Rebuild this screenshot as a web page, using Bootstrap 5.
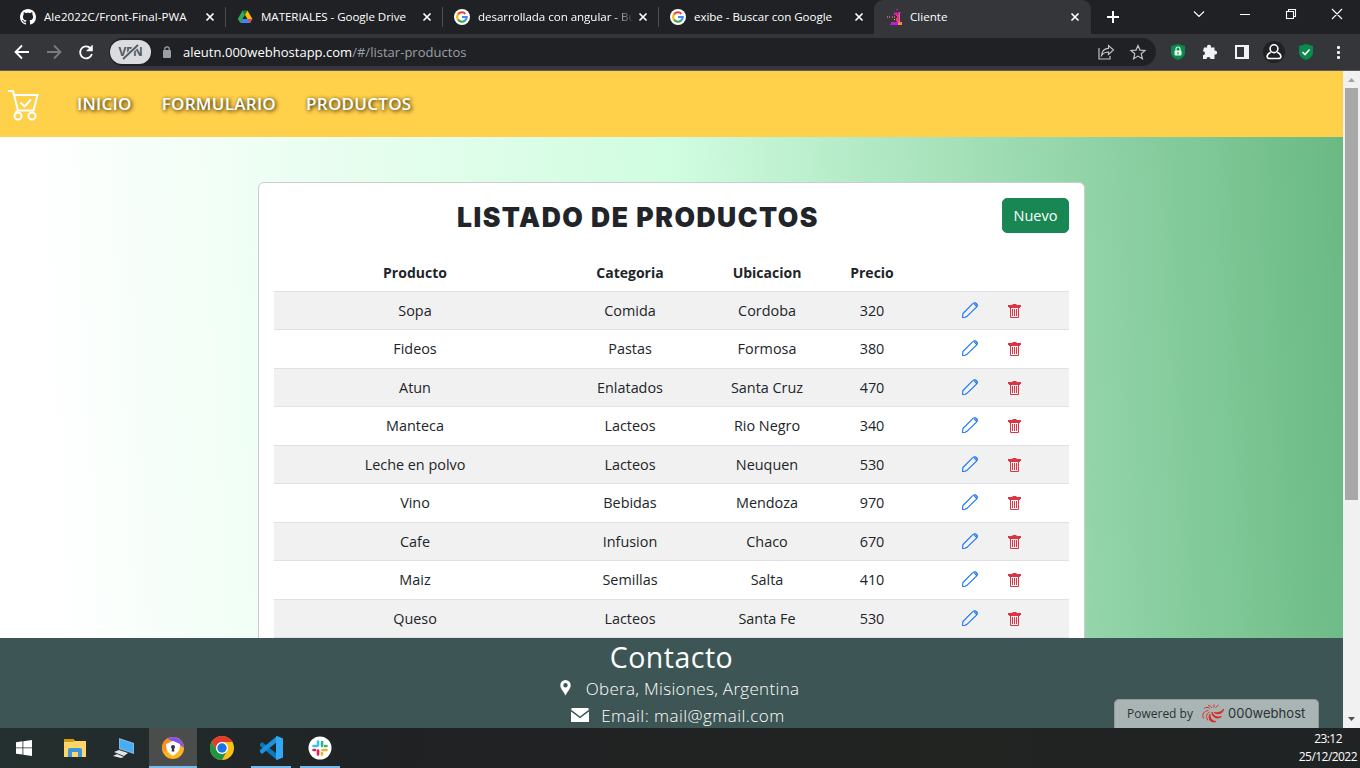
<!DOCTYPE html>
<html lang="es">
<head>
<meta charset="utf-8">
<title>Cliente</title>
<meta name="viewport" content="width=device-width, initial-scale=1">
<link rel="stylesheet" href="https://cdn.jsdelivr.net/npm/bootstrap@5.3.0/dist/css/bootstrap.min.css">
<style>
  html, body { height: 100%; overflow: hidden; }
  body { font-family: "Open Sans", "Noto Sans", sans-serif; font-size: 15px; }
  svg { display: block; flex: none; }
  .tabstrip { height: 34px; background: #202124; color: #fff; font-size: 12px; }
  .btab { height: 34px; width: 217px; padding-left: 20px; position: relative; }
  .btab .ttl { width: 160px; margin-left: 8px; white-space: nowrap; font-size: 11.6px; line-height: 18px; }
  .btab .ttl.fade-end { -webkit-mask-image: linear-gradient(90deg, #000 135px, transparent 156px); }
  .btab .closer { margin-left: auto; margin-right: 10px; }
  .btab.sep { border-right: 1px solid #4a4c50; height: 20px; }
  .btab.current { background: #35363a; border-radius: 9px 9px 0 0; padding-left: 13px; }
  .btab.current .ttl { margin-left: 7px; }
  .btab.current .closer { margin-right: 11px; }
  .toolbar { height: 37px; background: #35363a; border-bottom: 1px solid #5b5c60; }
  .omni { height: 28px; background: #202124; border-radius: 14px; width: 1047px; margin-left: 13px; font-size: 13px; color: #fff; }
  .omni .addr { padding: 1px 0 0 3px; letter-spacing: .02px; }
  .vpn { width: 41px; height: 24px; border-radius: 12px; background: #dadce0; color: #55585d; font: bold 12px/24px "Open Sans", sans-serif; letter-spacing: -.3px; position: relative; margin-left: 1px; }
  .vpn svg { position: absolute; left: 12px; top: 4px; }
  .viewport { height: 657px; }
  .site { width: 1343px; background: linear-gradient(87deg, #fff 4%, #d0fde0 51%, #69b983 100%); }
  .topnav { height: 66px; background: #ffd04a; padding: 0 0 0 8px; }
  .topnav a { color: #fff; font-size: 17px; font-weight: 600; text-decoration: none; text-shadow: 1px 1px 4px #000; line-height: 24px; white-space: nowrap; letter-spacing: .28px; }
  .content-area { height: 501px; overflow: hidden; padding-top: 45px; }
  .product-card { width: 827px; height: 600px; margin-left: 258px; border-color: #c8cfca; border-radius: 6px; padding: 15px; }
  .headline { font-family: Inter, sans-serif; font-weight: 900; font-size: 26.5px; line-height: 36px; margin: 1px 0 0; color: #212529; white-space: nowrap; letter-spacing: 1.5px; }
  .btn-new { width: 67px; height: 35px; padding: 0; font-size: 14.5px; border-radius: 5px; }
  .products { table-layout: fixed; width: 795px; margin: 18px 0 0; }
  .products > :not(caption) > * > * { height: 38.5px; padding: 1px 0 0; vertical-align: middle; line-height: 22px; border-color: #dee2e6; }
  .products > thead > tr > * { height: 38px; padding-top: 2px; }
  .products th { font-size: 14px; }
  .products td { font-size: 14.4px; font-weight: 400; }
  .products.table-striped > tbody > tr:nth-of-type(odd) > * { --bs-table-accent-bg: #f1f1f1; background: #f1f1f1; box-shadow: none; }
  .products .acts svg { display: inline-block; vertical-align: -2px; }
  .foot { height: 90px; background: #3d5655; color: #fff; position: relative; }
  .foot h2 { font-size: 28.5px; line-height: 34px; margin: 2px 0 0; font-weight: 500; letter-spacing: .5px; }
  .foot .line { font-size: 17px; line-height: 27px; height: 27px; white-space: nowrap; font-weight: 300; letter-spacing: .32px; }
  .foot .line span { padding-top: 1px; }
  .powered { position: absolute; right: 24px; bottom: 0; width: 205px; height: 29px; background: #a9b5b4; border: 1px solid #8d9a99; border-bottom: 0; border-radius: 5px 5px 0 0; color: #2b3233; font-size: 12px; }
  .sbar { width: 17px; background: #f1f1f1; }
  .sbar .thumb { width: 13px; height: 412px; background: #a8a8a8; }
  .taskbar { height: 40px; background: linear-gradient(90deg, #24302f, #1f2123 30%, #222422 70%, #202324); color: #fff; }
  .task { width: 49px; height: 40px; border-bottom: 2px solid transparent; }
  .task.live { background: #4b4d4d; width: 48px; border-color: #76b9ed; }
  .task.open { width: 40px; border-color: #76b9ed; }
  .clock { font-size: 12px; line-height: 18px; letter-spacing: -.55px; }
</style>
</head>
<body class="d-flex flex-column">
<svg width="0" height="0" class="position-absolute" aria-hidden="true">
  <symbol id="x" viewBox="0 0 10 10"><path d="M1.500 1.500l7 7M8.500 1.500l-7 7" stroke="#fff" stroke-width="1.700"/></symbol>
  <symbol id="g" viewBox="0 0 16 16"><circle cx="8" cy="8" r="8" fill="#fff"/><g fill="none" stroke-width="2.100"><path d="M4 5.400A4.600 4.600 0 0 1 11.400 4.900" stroke="#ea4335"/><path d="M4 5.400A4.700 4.700 0 0 0 4 10.600" stroke="#fbbc05"/><path d="M4 10.500A4.700 4.700 0 0 0 11 11.600" stroke="#34a853"/><path d="M11 11.600A4.600 4.600 0 0 0 12.700 8H8" stroke="#4285f4"/></g></symbol>
  <symbol id="pen" viewBox="0 0 16 16"><path d="M.6 15.400l.3-3.800L10 2.300C11.200 1 12.600.3 13.600 1L15 2.200c.7.800.3 2-.8 3.200L5 14.300l-1.800.9zM12 1.700l2.500 2.600M13 .5l2.500 2.600" fill="none" stroke="currentColor" stroke-width="1.050"/></symbol>
  <symbol id="trash" viewBox="0 0 13 14"><path d="M0 1h4.500V0h4v1H13v2h-1v1H1V3H0z" fill="currentColor"/><path d="M2.500 3.500v10h8v-10M4.500 5v7M6.500 5v7M8.500 5v7" fill="none" stroke="currentColor"/></symbol>
</svg>

<div class="tabstrip d-flex align-items-center">
  <div class="btab sep d-flex align-items-center" style="width:226px">
    <svg width="16" height="16" viewBox="0 0 16 16" fill="#fff"><path d="M8 0C3.580 0 0 3.580 0 8c0 3.540 2.290 6.530 5.470 7.590.4.070.55-.17.55-.38 0-.19-.01-.82-.01-1.490-2.010.37-2.530-.49-2.690-.94-.09-.23-.48-.94-.82-1.130-.28-.15-.68-.52-.01-.53.63-.01 1.080.58 1.230.82.72 1.210 1.870.87 2.330.66.07-.52.28-.87.51-1.070-1.780-.2-3.640-.89-3.640-3.950 0-.87.31-1.590.82-2.150-.08-.2-.36-1.020.08-2.120 0 0 .67-.21 2.200.82.64-.18 1.320-.27 2-.27s1.360.09 2 .27c1.530-1.040 2.200-.82 2.200-.82.44 1.100.16 1.920.08 2.120.51.56.82 1.270.82 2.150 0 3.070-1.870 3.750-3.650 3.950.29.25.54.73.54 1.480 0 1.070-.01 1.930-.01 2.200 0 .21.15.46.55.38A8 8 0 0 0 16 8c0-4.420-3.580-8-8-8"/></svg>
    <span class="ttl" style="letter-spacing:.04px">Ale2022C/Front-Final-PWA</span><svg class="closer" width="10" height="10"><use href="#x"/></svg>
  </div>
  <div class="btab sep d-flex align-items-center" style="width:217px;padding-left:11px">
    <svg width="16" height="16" viewBox="0 0 16 16"><path d="M5.500 1.500L8 5.800 3.300 14 .8 10z" fill="#34a853"/><path d="M5.500 1.500h5L8 5.800z" fill="#188038"/><path d="M10.500 1.500l4.900 8.500h-5L8 5.800z" fill="#fbbc04"/><path d="M5.600 10h9.800L13 14H3.300z" fill="#4285f4"/><path d="M10.500 10h4.900L13 14z" fill="#ea4335"/></svg>
    <span class="ttl" style="letter-spacing:-.06px">MATERIALES - Google Drive</span><svg class="closer" width="10" height="10"><use href="#x"/></svg>
  </div>
  <div class="btab sep d-flex align-items-center" style="width:216px;padding-left:11px">
    <svg width="16" height="16"><use href="#g"/></svg>
    <span class="ttl fade-end" style="letter-spacing:-.05px">desarrollada con angular - Bu</span><svg class="closer" width="10" height="10"><use href="#x"/></svg>
  </div>
  <div class="btab d-flex align-items-center" style="width:215px;padding-left:11px">
    <svg width="16" height="16"><use href="#g"/></svg>
    <span class="ttl" style="letter-spacing:-.06px">exibe - Buscar con Google</span><svg class="closer" width="10" height="10"><use href="#x"/></svg>
  </div>
  <div class="btab current d-flex align-items-center">
    <svg width="16" height="16" viewBox="0 0 16 16" fill="#e0388f" shape-rendering="crispEdges"><path d="M9 0h2v1H9z" fill="#c8286f"/><path d="M7 3h1v1h1V3h1v1h1V3h3v1h-1v2H7z" fill="#d41fae"/><path d="M0 7h1v2H0zM2 7h1v2H2zM5 7h1v2H5zM7 7h1v2H7z" fill="#c75a60"/><path d="M9 6h4v6H9V9h1V7H9z"/><path d="M7 10h1v1H7z" fill="#ffcf3d"/><path d="M12 4h1v9h2v3h-5v-4h2z" fill="#f0607a"/><path d="M13 13h2v3h-4v-2h2z" fill="#ff8a3d"/><path d="M4 13h7v3H3v-1h1z" fill="#c41bd0"/></svg>
    <span class="ttl">Cliente</span><svg class="closer" width="10" height="10"><use href="#x"/></svg>
  </div>
  <svg width="14" height="14" style="margin-left:15px" viewBox="0 0 14 14"><path d="M7 1v12M1 7h12" stroke="#fff" stroke-width="2"/></svg>
  <svg class="ms-auto" width="168" height="34" viewBox="1192 0 168 34" fill="none" stroke="#fff" stroke-width="1.100"><path d="M1194 11.500l5 5 5-5M1240 14.500h10M1286.500 11.500h7v7h-7zM1288.500 11.500v-2h7v7h-2M1332 9l10 10M1342 9l-10 10"/></svg>
</div>

<div class="toolbar d-flex align-items-center">
  <svg width="96" height="36" viewBox="0 0 96 36" fill="none" stroke="#fff" stroke-width="1.800"><path d="M29 18H16M22 11.500L15.500 18l6.500 6.500"/><path d="M47 18h13M54 11.500L60.500 18 54 24.500" stroke="#7b7c7f"/><path d="M90.500 14.200a6 6 0 1 0 1.400 5.800"/><path d="M92.500 11v6h-6z" fill="#fff" stroke-width=".5"/></svg>
  <div class="omni d-flex align-items-center">
    <div class="vpn text-center">VPN<svg width="18" height="16"><path d="M1 15L16 1" stroke="#dadce0" stroke-width="4"/><path d="M1 15L16 1" stroke="#55585d" stroke-width="1.800"/></svg></div>
    <svg width="10" height="12" viewBox="0 0 10 12" style="margin-left:11px"><rect x="1" y="4" width="8" height="8" rx="1" fill="#9aa0a6"/><path d="M2.800 5V3a2.200 2.200 0 0 1 4.400 0v2" stroke="#9aa0a6" stroke-width="1.300" fill="none"/></svg>
    <span class="ms-2 text-nowrap addr">aleutn.000webhostapp.com<span style="color:#9aa0a6">/#/listar-productos</span></span>
    <svg class="ms-auto me-2" width="50" height="18" viewBox="0 0 50 18" fill="none" stroke="#c2c4c7" stroke-width="1.200"><path d="M1 5v11h11v-3M3.500 12.500c.5-5 3-7 7-7.200V2.500L15.500 7l-5 4.500V9c-3 0-5 .9-7 3.500z"/><path d="M40 2.500l2 4.600 5 .4-3.800 3.300 1.200 4.900-4.400-2.600-4.400 2.600 1.200-4.900L33 7.500l5-.4z"/></svg>
  </div>
  <svg class="ms-auto" width="190" height="36" viewBox="1170 34 190 36"><g fill="#0b8a4c"><path d="M1178 44l7 2v6.500c0 4-4 6.500-7 7.500-3-1-7-3.500-7-7.500V46z"/><path d="M1306 44l7 2v6.500c0 4-4 6.500-7 7.500-3-1-7-3.500-7-7.500V46z"/></g><rect x="1174.500" y="50.500" width="7" height="5" rx="1" fill="#e8fff0"/><path d="M1176 51v-2a2 2 0 0 1 4 0v2" fill="none" stroke="#e8fff0" stroke-width="1.200"/><path d="M1178 52v2.500" stroke="#0b8a4c"/><path d="M1302.500 52l2.500 2.500 4.500-5" fill="none" stroke="#fff" stroke-width="1.600"/><path d="M1204 47.500h3.200a2 2 0 1 1 3.600 0h3.700v3.200a2 2 0 1 1 0 3.800v4.500h-4a2 2 0 0 0-4 0h-3.500v-3.700a2 2 0 0 0 0-4z" fill="#f1f3f4"/><path d="M1235 45h14v14h-14zM1237 47v10h7V47z" fill="#f1f3f4" fill-rule="evenodd"/><circle cx="1274" cy="52" r="11" fill="#202124"/><g fill="none" stroke="#fff" stroke-width="1.600"><circle cx="1274" cy="48.700" r="3.900"/><path d="M1270.700 52.300c-4.500 2-4.700 6.200-1 6.200h8.600c3.700 0 3.500-4.200-1-6.200"/></g><g fill="#f1f3f4"><rect x="1337" y="46" width="3" height="3" rx="1"/><rect x="1337" y="51" width="3" height="3" rx="1"/><rect x="1337" y="56" width="3" height="3" rx="1"/></g></svg>
</div>

<div class="viewport d-flex">
  <div class="site d-flex flex-column">
    <nav class="topnav d-flex align-items-center">
      <svg width="32" height="32" viewBox="0 0 32 32" fill="none" stroke="#fff" stroke-width="2" style="margin-top:1px"><path d="M0 2h5l5 19.500h15.500L29.500 6H6M9.500 22c-2 1-2 2.500-1 3"/><circle cx="10" cy="27" r="3.500"/><circle cx="24" cy="27" r="3.500"/><path d="M12.500 13.500l4 4 6.500-7"/></svg>
      <a href="#" style="margin-left:37px">INICIO</a>
      <a href="#" style="margin-left:30px">FORMULARIO</a>
      <a href="#" style="margin-left:30px">PRODUCTOS</a>
    </nav>
    <main class="content-area">
      <div class="card product-card">
        <div class="d-flex justify-content-between">
          <div class="flex-grow-1 text-center"><h1 class="headline">LISTADO DE PRODUCTOS</h1></div>
          <button class="btn btn-success btn-new">Nuevo</button>
        </div>
        <table class="table table-striped products text-center">
          <colgroup><col style="width:282px"><col style="width:148px"><col style="width:126px"><col style="width:84px"><col style="width:155px"></colgroup>
          <thead><tr><th>Producto</th><th>Categoria</th><th>Ubicacion</th><th>Precio</th><th></th></tr></thead>
          <tbody id="rows"></tbody>
        </table>
      </div>
    </main>
    <footer class="foot text-center">
      <h2 class="pt-0">Contacto</h2>
      <div class="line d-flex justify-content-center align-items-center ps-3"><svg width="11" height="16" viewBox="0 0 11 16"><path d="M5.500 0A5.200 5.200 0 0 0 .3 5.200c0 3.500 3.500 6.500 5.200 10.300 1.700-3.800 5.200-6.800 5.200-10.300A5.200 5.200 0 0 0 5.500 0zm0 3a2.200 2.200 0 1 1 0 4.400 2.200 2.200 0 0 1 0-4.400z" fill="#fff" fill-rule="evenodd"/></svg><span style="margin-left:15px">Obera, Misiones, Argentina</span></div>
      <div class="line d-flex justify-content-center align-items-center" style="padding-left:13px;letter-spacing:.45px"><svg width="18" height="14" viewBox="0 0 18 14" fill="#fff"><path d="M0 1.500Q0 0 1.500 0h15Q18 0 18 1.500L9 8.500zM0 3.500l9 6.800 9-6.800V14H0z"/></svg><span style="margin-left:12px">Email: mail@gmail.com</span></div>
      <div class="powered d-flex align-items-center"><span style="margin-left:12px">Powered by</span>
        <svg width="24" height="20" viewBox="0 0 24 20" style="margin-left:7px" fill="#dd2416"><path d="M23.500 5c0 4.500-5.500 6-9.500 3.500 3.500.8 7.500-.3 9.500-3.500zM21.500 12.500c-4 3.500-10 .5-9.500-4.500 1.500 4 5 6 9.500 4.500zM16 17.500c-5.500 2-8.500-3-6-7.500 0 4 1.500 7 6 7.500z" stroke="#dd2416" stroke-width=".8"/><path d="M8 16.500c-2.500-4-1.500-7 1.500-8.500M3.500 14.500c-2-4.500.5-7.500 5-8M4 4.500c2-1.500 4-1.500 6 0M8 1.500c2 .2 3.500 1 4 2.500M14 .5v3M18.500 1l-3 2.500" stroke="#dd2416" fill="none" stroke-width=".9"/></svg>
        <span style="margin-left:4px;font-family:Inter,sans-serif;font-size:13px;letter-spacing:.02px">000webhost</span></div>
    </footer>
  </div>
  <div class="sbar d-flex flex-column align-items-center">
    <svg width="17" height="17"><path d="M5 11h7L8.500 7z" fill="#a3a3a3"/></svg><div class="thumb"></div>
    <svg class="mt-auto" width="17" height="17"><path d="M5 6h7l-3.500 4z" fill="#505050"/></svg>
  </div>
</div>

<div class="taskbar d-flex">
  <div class="task d-flex align-items-center justify-content-center" style="width:47px"><svg width="16" height="16" viewBox="0 0 16 16" fill="#fff" style="margin-top:2px"><path d="M0 2.200l6.500-.9v6.200H0zM7.300 1.200L16 0v7.500H7.300zM0 8.300h6.500v6.300L0 13.800zM7.300 8.300H16V16l-8.700-1.200z"/></svg></div>
  <div class="task d-flex align-items-center justify-content-center" style="margin-left:3px"><svg width="22" height="20" viewBox="0 0 22 20" style="margin-top:2px"><path d="M0 1h9l2 2h11v16H0z" fill="#ffd667"/><path d="M0 1h9l2 2-2 1H0z" fill="#d79a10"/><path d="M4 19v-7q0-2 2-2h10q2 0 2 2v7h-4v-5H8v5z" fill="#3d97dc"/></svg></div>
  <div class="task d-flex align-items-center justify-content-center" style="width:50px"><svg width="22" height="20" viewBox="0 0 22 20" style="margin-top:2px"><path d="M6 0l15 5v11L6 11z" fill="#7fb9e0"/><path d="M7 1.500L20 6v8.500L7 10z" fill="#45aef2"/><path d="M1 14l5-2 9 3-4 3zM0 18l4-2 7 3-3 1z" fill="#e2e5e7"/></svg></div>
  <div class="task live d-flex align-items-center justify-content-center"><svg width="22" height="22" viewBox="0 0 22 22" style="margin-top:2px"><circle cx="11" cy="11" r="11" fill="#ffb41e"/><path d="M5 2a11 11 0 0 1 17 9l-5-4z" fill="#8352ef"/><path d="M0 11A11 11 0 0 1 6 1l3 5-6 9z" fill="#ff8a22"/><path d="M11 4l7 3c0 6-2 9-7 12-5-3-7-6-7-12z" fill="#fff"/><circle cx="11" cy="10" r="2" fill="#31343d"/><path d="M10.200 10h1.600l.6 4.500H9.600z" fill="#31343d"/></svg></div>
  <div class="task d-flex align-items-center justify-content-center"><svg width="24" height="24" viewBox="0 0 24 24" style="margin-top:2px"><circle cx="12" cy="12" r="12" fill="#fbc116"/><path d="M1.600 6A12 12 0 0 1 22.400 6H12a6 6 0 0 0-5 9z" fill="#e33b2e"/><path d="M1.600 6A12 12 0 0 0 12 24l5-9a6 6 0 0 1-10 0z" fill="#229342"/><circle cx="12" cy="12" r="6" fill="#fff"/><circle cx="12" cy="12" r="4.700" fill="#1a73e8"/></svg></div>
  <div class="task open d-flex align-items-center justify-content-center" style="margin-left:5px"><svg width="24" height="24" viewBox="0 0 24 24" style="margin-top:2px"><path d="M1 8l2-2 15 12v6L1 10z" fill="#0879bd"/><path d="M1 16l2 2L18 6V0L1 14z" fill="#1c91dc"/><path d="M18 0l6 2.500v19L18 24l-1-1V1z" fill="#31a8f5"/></svg></div>
  <div class="task open d-flex align-items-center justify-content-center" style="margin-left:9px"><svg width="24" height="24" viewBox="0 0 24 24" style="margin-top:2px"><circle cx="12" cy="12" r="11.500" fill="#fff"/><g stroke-width="2.600" stroke-linecap="round"><path d="M10 5.500v4M5.500 10H9" stroke="#36c5f0"/><path d="M14 6v4M18.500 10H17" stroke="#2eb67d"/><path d="M14 18.500V17M14.500 14h4" stroke="#ecb22e"/><path d="M10 18.500v-4M5.500 14H7" stroke="#e01e5a"/></g></svg></div>
  <div class="clock ms-auto d-flex flex-column align-items-end" style="padding:2px 3px 0 0"><span style="margin-right:15px">23:12</span><span>25/12/2022</span></div>
</div>
<script src="https://cdn.jsdelivr.net/npm/bootstrap@5.3.0/dist/js/bootstrap.bundle.min.js"></script>
<script>
  const products = [
    ["Sopa","Comida","Cordoba",320],["Fideos","Pastas","Formosa",380],["Atun","Enlatados","Santa Cruz",470],
    ["Manteca","Lacteos","Rio Negro",340],["Leche en polvo","Lacteos","Neuquen",530],["Vino","Bebidas","Mendoza",970],
    ["Cafe","Infusion","Chaco",670],["Maiz","Semillas","Salta",410],["Queso","Lacteos","Santa Fe",530]];
  document.getElementById("rows").innerHTML = products.map(p =>
    `<tr>${p.map(v => `<td>${v}</td>`).join("")}<td class="acts"><svg class="text-primary" width="16" height="16"><use href="#pen"/></svg><svg class="text-danger" style="margin-left:30px" width="13" height="14"><use href="#trash"/></svg></td></tr>`).join("");
</script>
</body>
</html>
